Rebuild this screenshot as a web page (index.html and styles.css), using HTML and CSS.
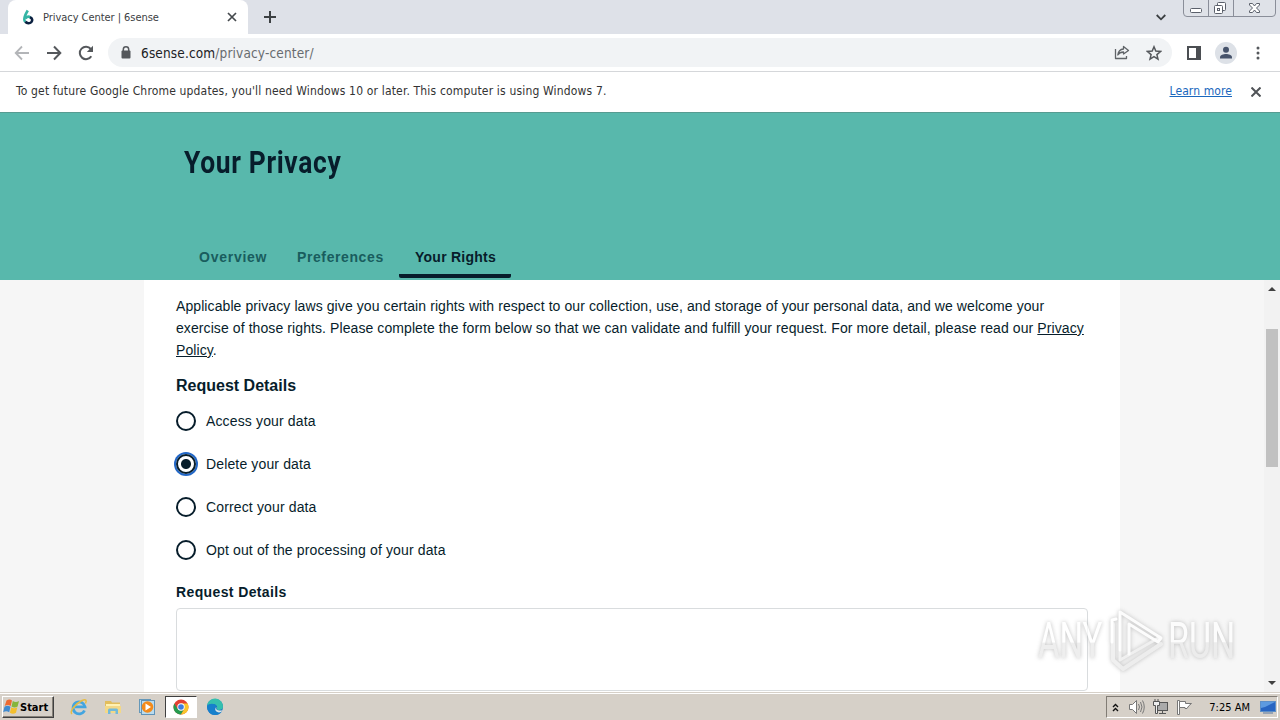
FILE: index.html
```html
<!DOCTYPE html>
<html lang="en">

<head>
    <meta charset="UTF-8">
    <meta name="viewport" content="width=device-width, initial-scale=1.0">
    <title>Privacy Center | 6sense</title>
    <link rel="stylesheet" href="styles.css">
</head>

<body>
    <div class="tab-strip">
        <div class="tab">
            <svg class="favicon" width="12" height="16" viewBox="0 0 12 16" fill="none" stroke-width="2.600">
                <path d="M5.800 1.500C4 4.500 2.300 7 2.300 10.300c0 1 .4 1.900 1 2.500M3.500 9.500C5 7.600 7 7.500 8.300 8.300" stroke="#35b5a5" />
                <path d="M8 8.200c2.500 1 2.800 3.400 1.300 4.900-1.600 1.500-4.300 1.300-6-.3" stroke="#0b2040" />
            </svg>
            <span class="tab-title">Privacy Center | 6sense</span>
            <svg class="tab-close" width="10" height="10" viewBox="0 0 10 10" stroke="#45494d" stroke-width="1.700"><path d="M1 1l8 8M9 1L1 9" /></svg>
        </div>
        <svg class="new-tab" width="12" height="12" viewBox="0 0 12 12" stroke="#3c4043" stroke-width="2"><path d="M6 0v12M0 6h12" /></svg>
        <svg class="tab-search" width="10" height="7" viewBox="0 0 10 7" fill="none" stroke="#3c4043" stroke-width="1.800"><path d="M.7 1L5 5.300 9.300 1" /></svg>
        <svg class="window-buttons" width="94" height="18" viewBox="0 0 94 18" fill="none" stroke="#8a8e99">
            <path d="M.5 0v13q0 3.500 3.500 3.500h85q3.500 0 3.500-3.500V0M25.500 0v16M50.500 0v16" fill="#dfe2e8" />
            <g stroke="#5b606b" fill="#fff">
                <rect x="7.500" y="8.500" width="11" height="4" rx="1" />
                <rect x="34.500" y="2.500" width="8" height="8" rx="1" />
                <rect x="31.500" y="5.500" width="8" height="8" rx="1" />
                <rect x="34.500" y="8.500" width="2" height="2" />
                <path d="M66.500 3.500h3l2 2.500 2-2.500h3v1.500l-3 3 3 3v1.500h-3l-2-2.500-2 2.500h-3V11l3-3-3-3z" />
            </g>
        </svg>
    </div>

    <div class="toolbar">
        <svg width="16" height="16" viewBox="0 0 16 16" fill="none" stroke="#b3b5b8" stroke-width="1.800"><path d="M15 8H2M8 1.500L1.700 8 8 14.500" /></svg>
        <svg width="16" height="16" viewBox="0 0 16 16" fill="none" stroke="#55585c" stroke-width="2"><path d="M1 8h13M8 1.500L14.300 8 8 14.500" /></svg>
        <svg width="16" height="16" viewBox="0 0 16 16" fill="none" stroke="#55585c" stroke-width="2"><path d="M13.300 11.200A6.200 6.200 0 1 1 12.800 4L14 5.300" /><path d="M15 .8V7H8.800z" fill="#55585c" stroke="none" /></svg>
        <div class="address-bar">
            <svg width="10" height="13" viewBox="0 0 10 13"><path d="M2.300 5V3.500a2.700 2.700 0 0 1 5.400 0V5" fill="none" stroke="#55585c" stroke-width="1.500" /><rect x=".5" y="4.500" width="9" height="8" rx="1" fill="#55585c" /></svg>
            <span class="url">6sense.com<span>/privacy-center/</span></span>
            <svg class="share" width="16" height="15" viewBox="0 0 16 15" fill="none" stroke="#606468" stroke-width="1.300"><path d="M1.500 4v9.500h11V11M9.500 1.500L14.500 5.500 9.500 9V7C7 7 5 8 3.800 10 4.200 6.500 6 4.300 9.500 4z" stroke-linejoin="round" /></svg>
            <svg width="16" height="16" viewBox="0 0 16 16" fill="none" stroke="#55585c" stroke-width="1.500"><path d="M8 1.800l1.800 4.300 4.700.4-3.600 3.100 1.100 4.500L8 11.700l-4 2.400 1.100-4.500-3.600-3.100 4.700-.4z" /></svg>
        </div>
        <svg class="side-panel" width="14" height="14" viewBox="0 0 14 14"><path d="M1 1h12v12H1z" fill="none" stroke="#4b4e52" stroke-width="2" /><path d="M9 1h5v12H9z" fill="#4b4e52" /></svg>
        <svg class="profile" width="22" height="22" viewBox="0 0 22 22" fill="#46536b"><circle cx="11" cy="11" r="11" fill="#dde1e7" /><circle cx="11" cy="7.700" r="3" /><path d="M5 16.500v-1.300c0-2 3.500-3.200 6-3.200s6 1.200 6 3.200v1.300z" /></svg>
        <svg class="more" width="4" height="14" viewBox="0 0 4 14" fill="#55585c"><circle cx="2" cy="2" r="1.500" /><circle cx="2" cy="7" r="1.500" /><circle cx="2" cy="12" r="1.500" /></svg>
    </div>

    <div class="infobar">
        <span class="infobar-text">To get future Google Chrome updates, you'll need Windows 10 or later. This computer is using Windows 7.</span>
        <a href="#">Learn more</a>
        <svg width="10" height="10" viewBox="0 0 10 10" stroke="#505357" stroke-width="2"><path d="M.5.5l9 9M9.500.5l-9 9" /></svg>
    </div>

    <header>
        <h1>Your Privacy</h1>
        <nav>
            <a class="overview">Overview</a>
            <a class="preferences">Preferences</a>
            <a class="rights active">Your Rights</a>
        </nav>
    </header>

    <div class="viewport">
        <main>
            <p class="intro">
                Applicable privacy laws give you certain rights with respect to our collection, use, and storage of your personal data, and we welcome your<br>
                exercise of those rights. Please complete the form below so that we can validate and fulfill your request. For more detail, please read our <u>Privacy</u><br>
                <u>Policy</u>.
            </p>
            <h2>Request Details</h2>
            <div class="options">
                <label><i class="radio"></i><span>Access your data</span></label>
                <label><i class="radio checked"></i><span>Delete your data</span></label>
                <label><i class="radio"></i><span>Correct your data</span></label>
                <label><i class="radio"></i><span>Opt out of the processing of your data</span></label>
            </div>
            <h3>Request Details</h3>
            <div class="textarea"></div>
        </main>
        <div class="scrollbar">
            <svg width="8" height="4" viewBox="0 0 8 4"><path d="M0 4l4-4 4 4z" fill="#404040" /></svg>
            <div class="thumb"></div>
            <svg width="8" height="4" viewBox="0 0 8 4"><path d="M0 0l4 4 4-4z" fill="#404040" /></svg>
        </div>
    </div>

    <div class="taskbar">
        <div class="start">
            <svg width="17" height="16" viewBox="0 0 17 16">
                <path d="M3.500 1.500q3-2 5.500 0L7.700 7q-3-1.800-6 0z" fill="#ed6a32" />
                <path d="M9.800 2q3 1.800 6.200 0L14.600 7.500q-3 1.800-6.100 0z" fill="#86b53c" />
                <path d="M1.500 7.800q3-2 6 0L6.200 13.300q-3-2-6 0z" fill="#3f8ad0" />
                <path d="M8.300 8.300q3 1.800 6 0L13 13.800q-3 1.800-6.100 0z" fill="#f4bf2d" />
            </svg>
            <span>Start</span>
        </div>
        <div class="app">
            <svg width="18" height="18" viewBox="0 0 18 18" fill="none"><path d="M14.500 12.500A6 6 0 1 1 15 8.800H5" stroke="#43a5e0" stroke-width="2.800" /><path d="M2 16C-1 14 5 6 12 2.500c4-2 5 0 3.500 3" stroke="#e7bc43" stroke-width="1.500" /></svg>
        </div>
        <div class="app">
            <svg width="18" height="18" viewBox="0 0 18 18"><path d="M1 3h6l1 1.500h8V15H1z" fill="#e2bd5d" /><path d="M2 6h14v4H2z" fill="#fff1b3" /><path d="M1 8h16v7H1z" fill="#f3d887" /><path d="M4 16v-4q0-1.500 1.500-1.500h7q1.500 0 1.500 1.500v4h-2.500v-3h-5v3z" fill="#72b9da" /></svg>
        </div>
        <div class="app">
            <svg width="18" height="18" viewBox="0 0 18 18"><rect x="1.500" y="1.500" width="11" height="13" fill="#b9dbee" stroke="#6598b9" /><rect x="3.500" y="2.500" width="13" height="14" fill="#b9dbee" stroke="#5f93b8" /><circle cx="9.500" cy="9" r="5.800" fill="#f38b1b" /><path d="M7.500 5.500v7L13 9z" fill="#fff" /></svg>
        </div>
        <div class="app running">
            <svg width="16" height="16" viewBox="0 0 16 16"><circle cx="8" cy="8" r="7.500" fill="#e34133" /><path d="M1.300 4.500A7.500 7.500 0 0 0 8 15.500L11.300 10 8 11.500 4.700 10z" fill="#249b4f" /><path d="M8 4.500h6.700A7.500 7.500 0 0 1 8 15.500l3.300-5.700z" fill="#f9c52c" /><circle cx="8" cy="8" r="3.700" fill="#fff" /><circle cx="8" cy="8" r="2.800" fill="#3c7de0" /></svg>
        </div>
        <div class="app">
            <svg width="18" height="18" viewBox="0 0 18 18"><circle cx="9" cy="9" r="8" fill="#1b6fc0" /><path d="M1 8a8 8 0 0 1 16 1c0 3-5 4-6.500 2 2-3-1-5-4-5-2.500 0-4.500 1-5.500 2z" fill="#35bfae" /><path d="M1 8c2-3 9-3 9.500 1-2 0-3 3 0 5 2 1 4 .5 5.500-.5C11 20 1 17 1 8z" fill="#1680cc" /><path d="M10.500 9c-1 2 0 4 6 3.500-2 3-6 2-7 0-.6-1.500 0-3 1-3.500z" fill="#d9e7e8" /></svg>
        </div>
        <div class="tray">
            <svg width="7" height="9" viewBox="0 0 7 9" fill="none" stroke="#111" stroke-width="1.400"><path d="M1 4l2.500-2.500L6 4M1 8l2.500-2.500L6 8" /></svg>
            <svg class="speaker" width="17" height="16" viewBox="0 0 17 16" fill="#fff" stroke="#777"><path d="M1.500 5.500h3l4-4v13l-4-4h-3z" /><path d="M10.500 5q2 3 0 6M12.500 3q3 5 0 10M14.500 1.500q3.500 6.500 0 13" fill="none" /></svg>
            <svg class="network" width="17" height="16" viewBox="0 0 17 16" fill="#eee" stroke="#555"><rect x="5.500" y="3.500" width="10" height="8" fill="#aaa" /><path d="M1.500 2.500h6v4h-2v8h-2v-8h-2zM3 2V0M6 2V0" /><path d="M7 14.500h7M10.500 12v2" /></svg>
            <svg class="flag" width="17" height="16" viewBox="0 0 17 16" fill="#fff" stroke="#777"><path d="M1.500 1.500h2v14h-2z" /><path d="M3.500 2.500h6v2h6q-3 2-4.500 5H9v-1H3.500z" /></svg>
            <span class="clock">7:25 AM</span>
            <svg class="desktop" width="16" height="13" viewBox="0 0 16 13"><rect x=".5" y=".5" width="15" height="10" fill="#2865c2" stroke="#5d8fc8" /><path d="M1 1h14L5 6 1 7z" fill="#5d9ae0" /><path d="M3 12h10" stroke="#5776a0" /></svg>
        </div>
    </div>

    <!-- watermark over the page corner -->
    <svg class="watermark" width="230" height="76" viewBox="0 0 230 76">
        <defs>
            <linearGradient id="fade" x1="0" y1="0" x2="0" y2="1">
                <stop offset=".52" stop-color="#fff" />
                <stop offset=".54" stop-color="#e9e9e9" />
            </linearGradient>
        </defs>
        <g fill="url(#fade)">
            <text transform="translate(8 56) scale(.66 1)">ANY</text>
            <text transform="translate(138 56) scale(.68 1)">RUN</text>
        </g>
        <g fill="none" stroke-linejoin="round" stroke-linecap="round">
            <path d="M83 22v36l10 9 38-25" stroke="#ebebeb" stroke-width="4" />
            <path d="M90 49V58l40-23" stroke="#eee" stroke-width="3" />
            <path d="M82 40V18l4-1M90 48V10l41 26-3 4-29-18v30" stroke="#fff" stroke-width="3" />
        </g>
    </svg>
</body>

</html>
```
FILE: styles.css
```css
* {
    box-sizing: border-box;
}

body {
    margin: 0;
    width: 1280px;
    height: 720px;
    overflow: hidden;
    display: flex;
    flex-direction: column;
    position: relative;
    font-family: "Liberation Sans", Arial, sans-serif;
    color: #071d2b;
    background: #fff;
}

svg {
    display: block;
    flex-shrink: 0;
}

/* browser chrome */
.tab-strip {
    height: 34px;
    display: flex;
    align-items: center;
    background: #dee1e8;
    flex-shrink: 0;
}

.tab {
    width: 240px;
    height: 34px;
    margin-left: 8px;
    padding: 0 11px 0 14px;
    display: flex;
    align-items: center;
    background: #fff;
    border-radius: 8px 8px 0 0;
}

.tab-title {
    margin-left: 9px;
    font: 11px "DejaVu Sans Condensed", "DejaVu Sans", sans-serif;
    letter-spacing: -.05px;
    color: #3c4043;
    white-space: nowrap;
}

.tab-close {
    margin-left: auto;
}

.new-tab {
    margin-left: 16px;
}

.tab-search {
    margin-left: auto;
}

.window-buttons {
    align-self: flex-start;
    margin: 0 3px 0 17px;
}

.toolbar {
    height: 38px;
    padding-left: 14px;
    display: flex;
    align-items: center;
    gap: 16px;
    border-bottom: 1px solid #d5d7da;
    flex-shrink: 0;
}

.address-bar {
    width: 1064px;
    height: 29px;
    margin-left: -2px;
    padding: 0 10px 0 13px;
    display: flex;
    align-items: center;
    background: #f1f3f5;
    border-radius: 15px;
}

.url {
    margin-left: 10px;
    font: 13.500px "DejaVu Sans Condensed", "DejaVu Sans", sans-serif;
    letter-spacing: .15px;
    color: #202124;
    white-space: nowrap;
}

.url span {
    color: #686c70;
}

.share {
    margin: 0 16px 0 auto;
}

.side-panel {
    margin-left: -1px;
}

.profile {
    margin-left: -2px;
}

.more {
    margin-left: 3px;
}

.infobar {
    height: 41px;
    padding: 0 19px 2px 16px;
    display: flex;
    align-items: center;
    border-bottom: 1px solid #579b91;
    font: 12px "DejaVu Sans Condensed", "DejaVu Sans", sans-serif;
    color: #333;
    white-space: nowrap;
    flex-shrink: 0;
}

.infobar-text {
    letter-spacing: .165px;
}

.infobar a {
    margin: 0 19px 0 auto;
    letter-spacing: .1px;
    color: #1a67bd;
}

.infobar svg {
    margin-top: 2px;
}

/* page header */
header {
    height: 167px;
    padding: 28px 184px 0;
    background: #58b8ac;
    flex-shrink: 0;
}

h1 {
    width: max-content;
    height: 44px;
    margin: 0;
    font: bold 32px/43px Roboto, sans-serif;
    letter-spacing: .8px;
    transform: scaleX(.825);
    transform-origin: left;
}

nav {
    display: flex;
    margin-top: 53px;
}

nav a {
    height: 40px;
    padding: 0 15px;
    font-size: 14px;
    font-weight: bold;
    line-height: 38px;
    letter-spacing: .6px;
    white-space: nowrap;
    color: #195d5e;
}

nav a.overview {
    width: 98px;
    letter-spacing: .75px;
}

nav a.preferences {
    width: 117px;
}

nav a.rights {
    width: 112px;
    padding: 0 16px;
    letter-spacing: .25px;
}

nav a.active {
    color: #071d2b;
    border-bottom: 4px solid #071d2b;
    border-radius: 2px;
}

/* page content */
.viewport {
    height: 412px;
    display: flex;
    background: #f6f6f6;
    overflow: hidden;
    flex-shrink: 0;
}

main {
    width: 976px;
    margin-left: 144px;
    padding: 15px 32px 0;
    background: #fff;
}

.intro {
    margin: 0;
    font-size: 14px;
    line-height: 22px;
    letter-spacing: .088px;
    white-space: nowrap;
}

h2 {
    margin: 14px 0 0;
    font-size: 16px;
    line-height: 22px;
}

.options {
    margin-top: 14px;
    display: flex;
    flex-direction: column;
    gap: 23px;
}

.options label {
    height: 20px;
    display: flex;
    align-items: center;
    font-size: 14px;
    letter-spacing: .14px;
}

.radio {
    width: 20px;
    height: 20px;
    margin-right: 10px;
    border: 2px solid #071d2b;
    border-radius: 50%;
    background: #fff;
}

.radio.checked {
    background: radial-gradient(circle, #071d2b 0 4.500px, #fff 5.500px);
    box-shadow: 0 0 0 2px #2267c7;
}

h3 {
    margin: 22px 0 6px;
    font-size: 14px;
    line-height: 20px;
    letter-spacing: .38px;
}

.textarea {
    height: 83px;
    border: 1px solid #d9dcde;
    border-radius: 4px;
}

.scrollbar {
    width: 16px;
    margin-left: auto;
    padding: 7px 0 7px;
    display: flex;
    flex-direction: column;
    align-items: center;
    background: #f2f2f2;
}

.thumb {
    width: 12px;
    height: 138px;
    margin: 38px 0 auto;
    background: #c1c1c1;
}

/* taskbar */
.taskbar {
    height: 28px;
    padding: 3px 2px 2px;
    display: flex;
    align-items: center;
    background: #d6d0c8;
    border-top: 1px solid #d6d0c8;
    box-shadow: inset 0 1px #fff;
    flex-shrink: 0;
}

.start {
    width: 52px;
    height: 22px;
    margin-right: 9px;
    display: flex;
    align-items: center;
    border: 1px solid;
    border-color: #fff #404040 #404040 #fff;
    box-shadow: inset -1px -1px #858078;
    font: bold 11px "DejaVu Sans Condensed", "DejaVu Sans", sans-serif;
    color: #000;
}

.app {
    width: 32px;
    height: 22px;
    margin-right: 2px;
    display: flex;
    align-items: center;
    justify-content: center;
}

.app.running {
    background: #fff;
    border: 1px solid;
    border-color: #404040 #fff #fff #404040;
}

.tray {
    width: 172px;
    height: 22px;
    margin-left: auto;
    padding: 0 1px 0 5px;
    display: flex;
    align-items: center;
    border: 1px solid;
    border-color: #817c75 #fff #fff #817c75;
}

.speaker {
    margin-left: 9px;
}

.network,
.flag {
    margin-left: 7px;
}

.clock {
    margin-left: auto;
    font: 11px "DejaVu Sans Condensed", "DejaVu Sans", sans-serif;
    color: #000;
}

.desktop {
    margin-left: 10px;
}

.watermark {
    position: absolute;
    left: 1030px;
    top: 602px;
    font: 400 50px Roboto, sans-serif;
    filter: drop-shadow(0 0 2px #aaa);
    opacity: .75;
}
```
